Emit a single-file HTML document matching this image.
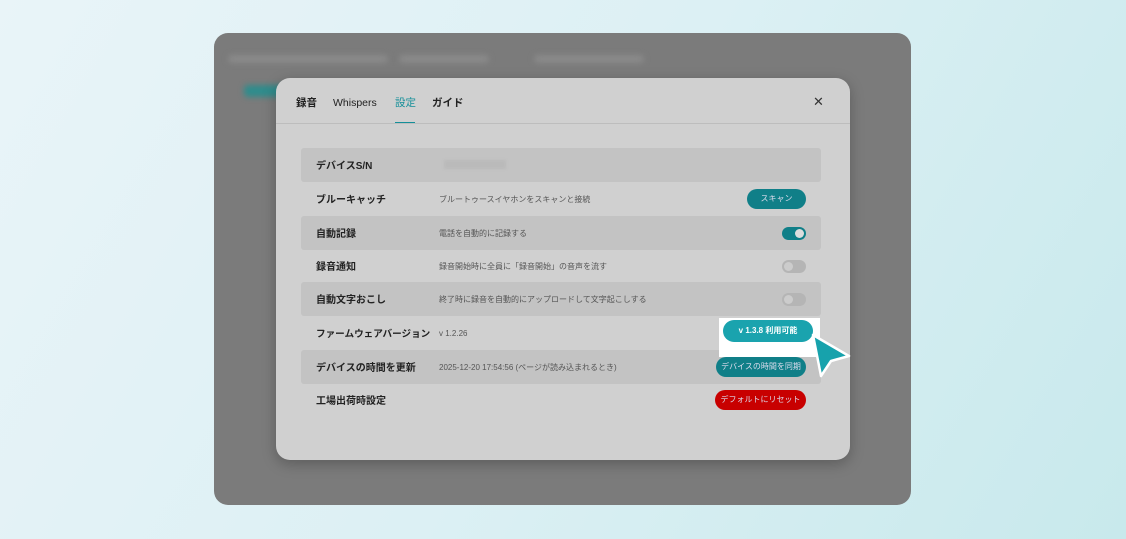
<!DOCTYPE html>
<html><head><meta charset="utf-8"><style>
*{margin:0;padding:0;box-sizing:border-box}
body{width:1126px;height:539px;overflow:hidden;background:linear-gradient(120deg,#e9f4f8 0%,#dcf0f4 50%,#c8e9ec 100%);font-family:"Liberation Sans","Noto Sans CJK JP",sans-serif;position:relative}
.outer{position:absolute;left:214px;top:33px;width:697px;height:472px;background:#7b7b7b;border-radius:14px;overflow:hidden}
.blur{position:absolute;background:#8a8a8a;border-radius:4px;filter:blur(3px)}
.modal{position:absolute;left:276px;top:78px;width:574px;height:382px;background:#d0d0d0;border-radius:14px;box-shadow:0 4px 14px rgba(0,0,0,.25)}
.tabs{position:absolute;left:20px;top:19px;font-size:10.5px;line-height:13px;color:#222;font-weight:bold}
.tabs span{position:absolute;top:0;white-space:nowrap}
.hr{position:absolute;left:0;right:0;top:45px;height:1px;background:#bdbdbd}
.x{position:absolute;left:537px;top:17px;font-size:13px;color:#333;line-height:14px}
.row{position:absolute;left:25px;width:520px;height:34px}
.row.g{background:#c3c3c3;border-radius:3px}
.lab{position:absolute;left:15px;top:13px;font-size:10px;line-height:12px;font-weight:bold;color:#222;white-space:nowrap}
.desc{position:absolute;left:138px;top:13px;font-size:8px;line-height:10px;color:#555;white-space:nowrap}
.btn{position:absolute;right:15px;top:7px;height:20px;border-radius:10px;color:#dde;font-size:8px;text-align:center;line-height:20px}
.tg{position:absolute;right:15px;top:11px;width:24px;height:13px;border-radius:7px;background:#b5b5b5}
.tg i{position:absolute;left:2px;top:2px;width:9px;height:9px;border-radius:50%;background:#ccc}
.tg.on{background:#107f88}.tg.on i{left:13px;background:#ddd}
</style></head><body>
<div class="outer">
<div class="blur" style="left:14px;top:22px;width:160px;height:8px"></div>
<div class="blur" style="left:185px;top:22px;width:90px;height:8px"></div>
<div class="blur" style="left:320px;top:22px;width:110px;height:8px"></div>
<div class="blur" style="left:30px;top:52px;width:40px;height:12px;background:#2f8c8c"></div>
</div>
<div class="modal">
<div class="tabs"><span style="left:0">録音</span><span style="left:37px;font-weight:normal">Whispers</span><span style="left:99px;color:#148f99;font-weight:normal">設定</span><span style="left:136px">ガイド</span></div>
<div style="position:absolute;left:119px;top:44px;width:20px;height:2px;background:#148f99"></div>
<div class="hr"></div>
<div class="x">✕</div>
<div class="row g" style="top:70px"><div class="lab">デバイスS/N</div><div style="position:absolute;left:143px;top:12px;width:62px;height:9px;background:#bababa;filter:blur(1px)"></div></div>
<div class="row" style="top:104px"><div class="lab">ブルーキャッチ</div><div class="desc">ブルートゥースイヤホンをスキャンと接続</div><div class="btn" style="width:59px;background:#107f88">スキャン</div></div>
<div class="row g" style="top:138px"><div class="lab">自動記録</div><div class="desc">電話を自動的に記録する</div><div class="tg on"><i></i></div></div>
<div class="row" style="top:171px"><div class="lab">録音通知</div><div class="desc">録音開始時に全員に「録音開始」の音声を流す</div><div class="tg"><i></i></div></div>
<div class="row g" style="top:204px"><div class="lab">自動文字おこし</div><div class="desc">終了時に録音を自動的にアップロードして文字起こしする</div><div class="tg"><i></i></div></div>
<div class="row" style="top:238px"><div class="lab" style="font-size:9.6px">ファームウェアバージョン</div><div class="desc" style="left:138px">v 1.2.26</div></div>
<div class="row g" style="top:272px"><div class="lab">デバイスの時間を更新</div><div class="desc">2025-12-20 17:54:56 (ページが読み込まれるとき)</div><div class="btn" style="width:90px;background:#107f88">デバイスの時間を同期</div></div>
<div class="row" style="top:305px"><div class="lab">工場出荷時設定</div><div class="btn" style="width:91px;background:#c80000">デフォルトにリセット</div></div>
</div>
<div style="position:absolute;left:719px;top:318px;width:101px;height:39px;background:#fff"></div>
<div style="position:absolute;left:723px;top:320px;width:90px;height:22px;border-radius:11px;background:#1aa3ae;color:#fff;font-size:8px;font-weight:bold;text-align:center;line-height:22px;font-family:'Liberation Sans','Noto Sans CJK JP',sans-serif">v 1.3.8 利用可能</div>
<svg style="position:absolute;left:805px;top:330px" width="50" height="52"><path d="M8 5 L44 26 L26 31 L16 46 Z" fill="#17a2ac" stroke="#fff" stroke-width="2.5" stroke-linejoin="round"/></svg>
</body></html>
